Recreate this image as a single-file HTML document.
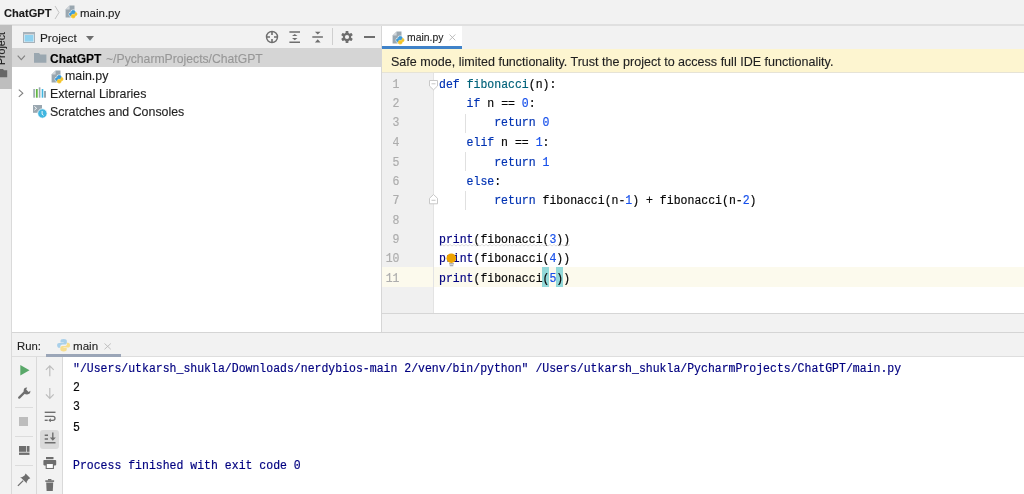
<!DOCTYPE html>
<html><head><meta charset="utf-8">
<style>
*{box-sizing:border-box;margin:0;padding:0}
html,body{width:1024px;height:494px;overflow:hidden;background:#fff;font-family:"Liberation Sans",sans-serif;font-size:12px;color:#1f1f1f}
.a{position:absolute}
.mono{font-family:"Liberation Mono",monospace;font-size:11.5px;white-space:pre;will-change:transform;-webkit-text-stroke:0.18px currentColor}
.kw{color:#0033b3}.fn{color:#00627a}.nu{color:#1750eb}.bi{color:#000080}.br{background:#93d9d9}.cm{color:#000080}
.t{white-space:pre;line-height:14px;will-change:transform;-webkit-text-stroke:0.12px currentColor}
</style></head><body>
<!-- top nav bar -->
<div class="a" style="left:0;top:0;width:1024px;height:26px;background:#f2f2f2;border-bottom:2px solid #e0e0e0"></div>
<div class="a t" style="left:4px;top:5.5px;font-size:11.1px;font-weight:bold;color:#1a1a1a">ChatGPT</div>
<svg class="a" style="left:54px;top:5px" width="6" height="15"><path d="M1 1 L5 7.5 L1 14" fill="none" stroke="#c4c4c4" stroke-width="1"/></svg>
<div class="a t" style="left:79.5px;top:5.5px;font-size:11.5px;color:#1a1a1a">main.py</div>

<!-- left strip -->
<div class="a" style="left:0;top:26px;width:12px;height:468px;background:#f2f2f2;border-right:1px solid #dadada"></div>
<div class="a" style="left:0;top:25px;width:11.5px;height:64px;background:#bebebe"></div>

<!-- project panel -->
<div class="a" style="left:12px;top:26px;width:369px;height:22px;background:#f2f2f2"></div>
<div class="a t" style="left:39.5px;top:31px;font-size:11.8px">Project</div>
<div class="a" style="left:12px;top:48px;width:369px;height:19px;background:#d5d5d5"></div>
<div class="a t" style="left:49.5px;top:52px;font-weight:bold;color:#000">ChatGPT</div>
<div class="a t" style="left:106px;top:52px;font-size:12.2px;color:#979797">~/PycharmProjects/ChatGPT</div>
<div class="a t" style="left:65px;top:69px;font-size:12.4px">main.py</div>
<div class="a t" style="left:49.5px;top:87px;font-size:12.4px">External Libraries</div>
<div class="a t" style="left:49.5px;top:105px;font-size:12.4px">Scratches and Consoles</div>

<!-- divider -->
<div class="a" style="left:381px;top:26px;width:1px;height:307px;background:#d6d6d6"></div>

<!-- editor -->
<div class="a" style="left:382px;top:26px;width:642px;height:23px;background:#f2f2f2"></div>
<div class="a" style="left:382px;top:26px;width:80px;height:23px;background:#fff"></div>
<div class="a" style="left:382px;top:46px;width:80px;height:3px;background:#4083c9"></div>
<div class="a t" style="left:406.5px;top:31px;font-size:10.4px;-webkit-text-stroke:0.1px currentColor;color:#222">main.py</div>
<div class="a" style="left:382px;top:49px;width:642px;height:24px;background:#fdf5d0;border-bottom:1px solid #e6e3d6"></div>
<div class="a t" style="left:390.5px;top:54.5px;font-size:12.55px">Safe mode, limited functionality. Trust the project to access full IDE functionality.</div>
<div class="a" style="left:382px;top:73px;width:52px;height:240px;background:#f0f0f0"></div>
<div class="a" style="left:382px;top:313px;width:642px;height:20px;background:#f2f2f2;border-top:1px solid #d6d6d6"></div>

<!-- run panel -->
<div class="a" style="left:12px;top:332px;width:1012px;height:25px;background:#f2f2f2;border-top:1px solid #d5d5d5;border-bottom:1px solid #dedede"></div>
<div class="a t" style="left:16.8px;top:338.5px;font-size:11.3px">Run:</div>
<div class="a t" style="left:73.3px;top:338.5px;font-size:11.6px">main</div>
<div class="a" style="left:46px;top:354px;width:75px;height:3px;background:#9ba6b8"></div>
<div class="a" style="left:12px;top:357px;width:25px;height:137px;background:#f2f2f2;border-right:1px solid #d9d9d9"></div>
<div class="a" style="left:37px;top:357px;width:26px;height:137px;background:#f2f2f2;border-right:1px solid #d9d9d9"></div>

<!-- code -->
<div class="a" style="left:382px;top:267px;width:642px;height:20px;background:#fcfaed"></div>


<!-- ICONS -->
<svg class="a" style="left:64.5px;top:5px" width="14" height="15" viewBox="0 0 14 15"><path d="M4.6 0.5 H9.5 V12.6 H0.6 V4.5 Z" fill="#9aa7b0"/><path d="M0.6 4.5 L4.6 0.5 V4.5 Z" fill="#d0d6da"/><g transform="translate(4.4,5.4) scale(0.076,0.076)"><path d="M50 0 C30 0 26 8 26 16 V27 H51 V31 H16 C6 31 0 38 0 50 C0 62 6 71 16 71 H25 V59 C25 51 32 44 41 44 H60 C68 44 75 37 75 29 V16 C75 8 68 0 50 0 Z" fill="#fff" stroke="#fff" stroke-width="22" stroke-linejoin="round"/><path d="M50 0 C30 0 26 8 26 16 V27 H51 V31 H16 C6 31 0 38 0 50 C0 62 6 71 16 71 H25 V59 C25 51 32 44 41 44 H60 C68 44 75 37 75 29 V16 C75 8 68 0 50 0 Z" fill="#fff" stroke="#fff" stroke-width="22" stroke-linejoin="round" transform="rotate(180 50 50)"/><path d="M50 0 C30 0 26 8 26 16 V27 H51 V31 H16 C6 31 0 38 0 50 C0 62 6 71 16 71 H25 V59 C25 51 32 44 41 44 H60 C68 44 75 37 75 29 V16 C75 8 68 0 50 0 Z" fill="#3d9ad6" stroke="#3d9ad6" stroke-width="10" stroke-linejoin="round"/><path d="M50 0 C30 0 26 8 26 16 V27 H51 V31 H16 C6 31 0 38 0 50 C0 62 6 71 16 71 H25 V59 C25 51 32 44 41 44 H60 C68 44 75 37 75 29 V16 C75 8 68 0 50 0 Z" fill="#f4c428" stroke="#f4c428" stroke-width="10" stroke-linejoin="round" transform="rotate(180 50 50)"/></g></svg>
<!-- left strip vertical tab -->
<div class="a" style="left:-6px;top:64.5px;width:40px;height:14px;transform:rotate(-90deg);transform-origin:0 0;font-size:10.6px;line-height:14px;color:#222;white-space:pre;-webkit-text-stroke:0.2px #222;will-change:transform">Project</div>
<svg class="a" style="left:0;top:69px" width="8" height="9"><path d="M0 0 H3 L4 1.3 H7.2 V8.3 H0 Z" fill="#666"/></svg>
<!-- project header icon -->
<svg class="a" style="left:23px;top:32px" width="12" height="11"><rect x="0.5" y="0.5" width="11" height="10" fill="#e8eef2" stroke="#a7b2ba" stroke-width="1"/><rect x="1" y="1" width="10" height="1.4" fill="#a7b2ba"/><rect x="1.6" y="3" width="8.8" height="6.6" fill="#8fd1ef"/></svg>
<svg class="a" style="left:86px;top:35.5px" width="8" height="5"><path d="M0 0 H8 L4 4.7 Z" fill="#6e6e6e"/></svg>
<!-- toolbar icons -->
<svg class="a" style="left:264px;top:29px" width="16" height="16"><circle cx="8" cy="8" r="5.5" fill="none" stroke="#6e6e6e" stroke-width="1.4"/><path d="M8 2.6 V6 M8 10 V13.4 M2.6 8 H6 M10 8 H13.4" stroke="#6e6e6e" stroke-width="1.6"/></svg>
<svg class="a" style="left:287px;top:29px" width="16" height="16"><path d="M2.4 2.9 H13 M2.4 13.2 H13" stroke="#6e6e6e" stroke-width="1.5"/><path d="M5 7.1 L7.75 4.9 L10.5 7.1 Z M5 9 L10.5 9 L7.75 11.2 Z" fill="#6e6e6e"/></svg>
<svg class="a" style="left:310px;top:29px" width="16" height="16"><path d="M2.3 8 H12.9" stroke="#6e6e6e" stroke-width="1.5"/><path d="M4.9 2.7 H10.6 L7.75 5.6 Z M4.9 13.4 H10.6 L7.75 10.3 Z" fill="#6e6e6e"/></svg>
<div class="a" style="left:332px;top:28px;width:1px;height:17px;background:#cfcfcf"></div>
<svg class="a" style="left:339px;top:29px" width="16" height="16" viewBox="0 0 16 16"><g fill="#6e6e6e"><circle cx="8" cy="8" r="4.2"/><rect x="6.6" y="2.1" width="2.8" height="11.8" rx="0.5"/><rect x="6.6" y="2.1" width="2.8" height="11.8" rx="0.5" transform="rotate(60 8 8)"/><rect x="6.6" y="2.1" width="2.8" height="11.8" rx="0.5" transform="rotate(120 8 8)"/></g><circle cx="8" cy="8" r="2.1" fill="#f2f2f2"/></svg>
<div class="a" style="left:364px;top:36px;width:11px;height:2px;background:#6e6e6e"></div>
<!-- tree icons -->
<svg class="a" style="left:17px;top:54.5px" width="9" height="6"><path d="M0.7 0.7 L4.3 4.6 L7.9 0.7" fill="none" stroke="#7f7f7f" stroke-width="1.1"/></svg>
<svg class="a" style="left:33.5px;top:53px" width="13" height="10"><path d="M0 0 H5 L6.3 1.6 H12.4 V9.7 H0 Z" fill="#9aa7b0"/></svg>
<svg class="a" style="left:50.5px;top:69.5px" width="14" height="15" viewBox="0 0 14 15"><path d="M4.6 0.5 H9.5 V12.6 H0.6 V4.5 Z" fill="#9aa7b0"/><path d="M0.6 4.5 L4.6 0.5 V4.5 Z" fill="#d0d6da"/><g transform="translate(4.4,5.4) scale(0.076,0.076)"><path d="M50 0 C30 0 26 8 26 16 V27 H51 V31 H16 C6 31 0 38 0 50 C0 62 6 71 16 71 H25 V59 C25 51 32 44 41 44 H60 C68 44 75 37 75 29 V16 C75 8 68 0 50 0 Z" fill="#fff" stroke="#fff" stroke-width="22" stroke-linejoin="round"/><path d="M50 0 C30 0 26 8 26 16 V27 H51 V31 H16 C6 31 0 38 0 50 C0 62 6 71 16 71 H25 V59 C25 51 32 44 41 44 H60 C68 44 75 37 75 29 V16 C75 8 68 0 50 0 Z" fill="#fff" stroke="#fff" stroke-width="22" stroke-linejoin="round" transform="rotate(180 50 50)"/><path d="M50 0 C30 0 26 8 26 16 V27 H51 V31 H16 C6 31 0 38 0 50 C0 62 6 71 16 71 H25 V59 C25 51 32 44 41 44 H60 C68 44 75 37 75 29 V16 C75 8 68 0 50 0 Z" fill="#3d9ad6" stroke="#3d9ad6" stroke-width="10" stroke-linejoin="round"/><path d="M50 0 C30 0 26 8 26 16 V27 H51 V31 H16 C6 31 0 38 0 50 C0 62 6 71 16 71 H25 V59 C25 51 32 44 41 44 H60 C68 44 75 37 75 29 V16 C75 8 68 0 50 0 Z" fill="#f4c428" stroke="#f4c428" stroke-width="10" stroke-linejoin="round" transform="rotate(180 50 50)"/></g></svg>
<svg class="a" style="left:18px;top:89px" width="6" height="9"><path d="M0.8 0.6 L4.8 4.2 L0.8 7.8" fill="none" stroke="#7f7f7f" stroke-width="1.1"/></svg>
<svg class="a" style="left:33px;top:87px" width="14" height="11"><rect x="0.3" y="2" width="1.6" height="8.7" fill="#9aa7b0"/><rect x="2.9" y="2" width="1.8" height="8.7" fill="#62b543"/><rect x="5.8" y="0.3" width="1.6" height="10.4" fill="#9aa7b0"/><rect x="8.7" y="2" width="1.6" height="8.7" fill="#40b6e0"/><rect x="11" y="4" width="2" height="6.7" fill="#9aa7b0"/></svg>
<svg class="a" style="left:33px;top:105px" width="15" height="14"><rect x="0" y="0" width="9" height="7.8" fill="#9aa7b0"/><path d="M1.4 1.4 L3.6 3.3 L1.4 5.2" fill="none" stroke="#fff" stroke-width="0.9"/><circle cx="9.4" cy="8.5" r="4.7" fill="#40b6e0" stroke="#fff" stroke-width="0.8"/><path d="M9.1 6 V9.2 L10.6 10.4" fill="none" stroke="#fff" stroke-width="0.9"/></svg>
<!-- editor tab -->
<svg class="a" style="left:391.5px;top:30.5px" width="14" height="15" viewBox="0 0 14 15"><path d="M4.6 0.5 H9.5 V12.6 H0.6 V4.5 Z" fill="#9aa7b0"/><path d="M0.6 4.5 L4.6 0.5 V4.5 Z" fill="#d0d6da"/><g transform="translate(4.4,5.4) scale(0.076,0.076)"><path d="M50 0 C30 0 26 8 26 16 V27 H51 V31 H16 C6 31 0 38 0 50 C0 62 6 71 16 71 H25 V59 C25 51 32 44 41 44 H60 C68 44 75 37 75 29 V16 C75 8 68 0 50 0 Z" fill="#fff" stroke="#fff" stroke-width="22" stroke-linejoin="round"/><path d="M50 0 C30 0 26 8 26 16 V27 H51 V31 H16 C6 31 0 38 0 50 C0 62 6 71 16 71 H25 V59 C25 51 32 44 41 44 H60 C68 44 75 37 75 29 V16 C75 8 68 0 50 0 Z" fill="#fff" stroke="#fff" stroke-width="22" stroke-linejoin="round" transform="rotate(180 50 50)"/><path d="M50 0 C30 0 26 8 26 16 V27 H51 V31 H16 C6 31 0 38 0 50 C0 62 6 71 16 71 H25 V59 C25 51 32 44 41 44 H60 C68 44 75 37 75 29 V16 C75 8 68 0 50 0 Z" fill="#3d9ad6" stroke="#3d9ad6" stroke-width="10" stroke-linejoin="round"/><path d="M50 0 C30 0 26 8 26 16 V27 H51 V31 H16 C6 31 0 38 0 50 C0 62 6 71 16 71 H25 V59 C25 51 32 44 41 44 H60 C68 44 75 37 75 29 V16 C75 8 68 0 50 0 Z" fill="#f4c428" stroke="#f4c428" stroke-width="10" stroke-linejoin="round" transform="rotate(180 50 50)"/></g></svg>
<svg class="a" style="left:448.5px;top:33.5px" width="7" height="7"><path d="M0.5 0.5 L6.3 6.3 M6.3 0.5 L0.5 6.3" stroke="#b4b4b4" stroke-width="0.9"/></svg>
<!-- run tab -->
<svg class="a" style="left:56.8px;top:338.7px" width="14" height="14" viewBox="0 0 14 14"><g transform="translate(0.1,0.1) scale(0.13,0.123)"><path d="M50 0 C30 0 26 8 26 16 V27 H51 V31 H16 C6 31 0 38 0 50 C0 62 6 71 16 71 H25 V59 C25 51 32 44 41 44 H60 C68 44 75 37 75 29 V16 C75 8 68 0 50 0 Z" fill="#a9d0ea"/><path d="M50 0 C30 0 26 8 26 16 V27 H51 V31 H16 C6 31 0 38 0 50 C0 62 6 71 16 71 H25 V59 C25 51 32 44 41 44 H60 C68 44 75 37 75 29 V16 C75 8 68 0 50 0 Z" fill="#f7de90" transform="rotate(180 50 50)"/></g></svg>
<svg class="a" style="left:104px;top:342.5px" width="8" height="7"><path d="M0.5 0.5 L6.8 6.3 M6.8 0.5 L0.5 6.3" stroke="#bababa" stroke-width="0.9"/></svg>
<!-- run toolbar col1 -->
<svg class="a" style="left:19.5px;top:364.5px" width="10" height="11"><path d="M0.3 0 L9.5 5.2 L0.3 10.5 Z" fill="#59a869"/></svg>
<svg class="a" style="left:17.5px;top:386.5px" width="13" height="12" viewBox="0 0 13 12"><path d="M1.2 10.6 L6.2 5.6" stroke="#6e6e6e" stroke-width="2.2" stroke-linecap="round"/><path d="M9.2 0.6 A3.4 3.4 0 1 0 12.4 3.8 L10.6 5.0 L8.2 2.6 Z" fill="#6e6e6e"/></svg>
<div class="a" style="left:15px;top:407px;width:18px;height:1px;background:#dcdcdc"></div>
<div class="a" style="left:19.3px;top:417px;width:8.7px;height:8.7px;background:#bdbdbd"></div>
<div class="a" style="left:15px;top:436px;width:18px;height:1px;background:#dcdcdc"></div>
<svg class="a" style="left:18.5px;top:446px" width="11" height="9"><rect x="0" y="0" width="7" height="5.8" fill="#6e6e6e"/><rect x="7.7" y="0" width="2.8" height="5.8" fill="#6e6e6e"/><rect x="0" y="6.6" width="10.5" height="2.3" fill="#6e6e6e"/></svg>
<div class="a" style="left:15px;top:465px;width:18px;height:1px;background:#dcdcdc"></div>
<svg class="a" style="left:17px;top:473px" width="14" height="14" viewBox="0 0 14 14"><path d="M8.6 0.5 L13.3 5.2 L11.4 6.2 L9.6 8.9 L9.9 10.6 L3.2 3.9 L4.9 4.2 L7.6 2.4 Z" fill="#6e6e6e"/><path d="M6.2 7.6 L0.9 12.9" stroke="#6e6e6e" stroke-width="1.3"/></svg>
<!-- run toolbar col2 -->
<svg class="a" style="left:44.5px;top:364.5px" width="10" height="12"><path d="M4.8 1 V11.2 M0.9 4.8 L4.8 0.9 L8.7 4.8" fill="none" stroke="#bdbdbd" stroke-width="1.2"/></svg>
<svg class="a" style="left:44.5px;top:387.5px" width="10" height="12"><path d="M4.8 0 V10.2 M0.9 6.4 L4.8 10.3 L8.7 6.4" fill="none" stroke="#bdbdbd" stroke-width="1.2"/></svg>
<svg class="a" style="left:43.5px;top:410.5px" width="13" height="11"><path d="M0.7 1.3 H11.5" stroke="#6e6e6e" stroke-width="1.4"/><path d="M0.7 9.3 H3.7" stroke="#6e6e6e" stroke-width="1.4"/><path d="M0.7 5.3 H9 A2 2 0 0 1 9 9.3 H5.7" fill="none" stroke="#6e6e6e" stroke-width="1.3"/><path d="M4.3 9.3 L6.8 7.2 V11.4 Z" fill="#6e6e6e"/></svg>
<div class="a" style="left:40px;top:429.8px;width:19px;height:19px;background:#dadada;border-radius:3px"></div>
<svg class="a" style="left:43.5px;top:432px" width="13" height="12"><path d="M0.7 3.3 H4 M0.7 7 H4 M0.7 10.8 H11.5" stroke="#6e6e6e" stroke-width="1.4"/><path d="M8.8 0.5 V7" stroke="#6e6e6e" stroke-width="1.4"/><path d="M5.8 5.6 H11.8 L8.8 8.8 Z" fill="#6e6e6e"/></svg>
<svg class="a" style="left:42.5px;top:456.5px" width="14" height="12"><rect x="3" y="0" width="7.5" height="2.2" fill="#6e6e6e"/><rect x="0.4" y="3" width="12.8" height="5.4" rx="0.8" fill="#6e6e6e"/><rect x="3.2" y="6.5" width="7.2" height="5" fill="#fff" stroke="#6e6e6e" stroke-width="1.1"/></svg>
<svg class="a" style="left:44.5px;top:478.5px" width="10" height="12"><rect x="0.3" y="1.3" width="8.8" height="1.6" fill="#6e6e6e"/><rect x="3" y="0" width="3.4" height="1.5" fill="#6e6e6e"/><path d="M1.2 3.6 H8.2 L7.8 11.9 H1.6 Z" fill="#6e6e6e"/></svg>
<!-- code decorations -->
<div class="a" style="left:433px;top:73px;width:1px;height:240px;background:#e3e3e3"></div>
<svg class="a" style="left:428.5px;top:80px" width="10" height="11"><path d="M0.5 0.5 H8.5 V6 L4.5 9.8 L0.5 6 Z" fill="#fff" stroke="#c8c8c8" stroke-width="1"/><path d="M2.5 3.8 H6.5" stroke="#c0c0c0" stroke-width="0.9"/></svg>
<svg class="a" style="left:428.5px;top:194px" width="10" height="11"><path d="M0.5 9.8 H8.5 V4.3 L4.5 0.5 L0.5 4.3 Z" fill="#fff" stroke="#c8c8c8" stroke-width="1"/><path d="M2.5 6.3 H6.5" stroke="#c0c0c0" stroke-width="0.9"/></svg>
<div class="a" style="left:465px;top:113.5px;width:1px;height:19px;background:#e0e0e0"></div>
<div class="a" style="left:465px;top:152.3px;width:1px;height:19px;background:#e0e0e0"></div>
<div class="a" style="left:465px;top:190.5px;width:1px;height:19px;background:#e0e0e0"></div>
<div class="a" style="left:541.9px;top:267px;width:6.9px;height:20px;background:#93d9d9"></div>
<div class="a" style="left:555.7px;top:267px;width:6.9px;height:20px;background:#93d9d9"></div>

<div class="a mono" style="left:382px;top:74.8px;width:17.5px;line-height:18.13px;color:#adadad;text-align:right;transform:scaleY(1.07);transform-origin:0 0">1
2
3
4
5
6
7
8
9
10
11</div>
<div class="a mono" style="left:438.5px;top:74.8px;line-height:18.13px;color:#080808;transform:scaleY(1.07);transform-origin:0 0"><span class="kw">def</span> <span class="fn">fibonacci</span>(n):
    <span class="kw">if</span> n == <span class="nu">0</span>:
        <span class="kw">return</span> <span class="nu">0</span>
    <span class="kw">elif</span> n == <span class="nu">1</span>:
        <span class="kw">return</span> <span class="nu">1</span>
    <span class="kw">else</span>:
        <span class="kw">return</span> fibonacci(n-<span class="nu">1</span>) + fibonacci(n-<span class="nu">2</span>)

<span class="bi">print</span>(fibonacci(<span class="nu">3</span>))
<span class="bi">print</span>(fibonacci(<span class="nu">4</span>))
<span class="bi">print</span>(fibonacci(<span class="nu">5</span>))</div>

<!-- console -->
<div class="a mono" style="left:72.5px;top:358.5px;line-height:18.22px;color:#080808;transform:scaleY(1.07);transform-origin:0 0"><span class="cm">"/Users/utkarsh_shukla/Downloads/nerdybios-main 2/venv/bin/python" /Users/utkarsh_shukla/PycharmProjects/ChatGPT/main.py</span>
2
3
5

<span class="cm">Process finished with exit code 0</span></div>
<svg class="a" style="left:446px;top:253px" width="11" height="14"><rect x="3.1" y="10" width="4.8" height="1.5" fill="#b0b0b0"/><rect x="3.7" y="11.9" width="3.6" height="1.4" fill="#b0b0b0"/><circle cx="5.3" cy="5.2" r="4.8" fill="#eda200"/></svg>
<svg class="a" style="left:439.5px;top:243.5px" width="131" height="3"><path d="M0 2 L2 0.5 L4 2 L6 0.5 L8 2 L10 0.5 L12 2 L14 0.5 L16 2 L18 0.5 L20 2 L22 0.5 L24 2 L26 0.5 L28 2 L30 0.5 L32 2 L34 0.5 L36 2 L38 0.5 L40 2 L42 0.5 L44 2 L46 0.5 L48 2 L50 0.5 L52 2 L54 0.5 L56 2 L58 0.5 L60 2 L62 0.5 L64 2 L66 0.5 L68 2 L70 0.5 L72 2 L74 0.5 L76 2 L78 0.5 L80 2 L82 0.5 L84 2 L86 0.5 L88 2 L90 0.5 L92 2 L94 0.5 L96 2 L98 0.5 L100 2 L102 0.5 L104 2 L106 0.5 L108 2 L110 0.5 L112 2 L114 0.5 L116 2 L118 0.5 L120 2 L122 0.5 L124 2 L126 0.5 L128 2 L130 0.5" fill="none" stroke="#d4d4d4" stroke-width="0.8"/></svg>
</body></html>
